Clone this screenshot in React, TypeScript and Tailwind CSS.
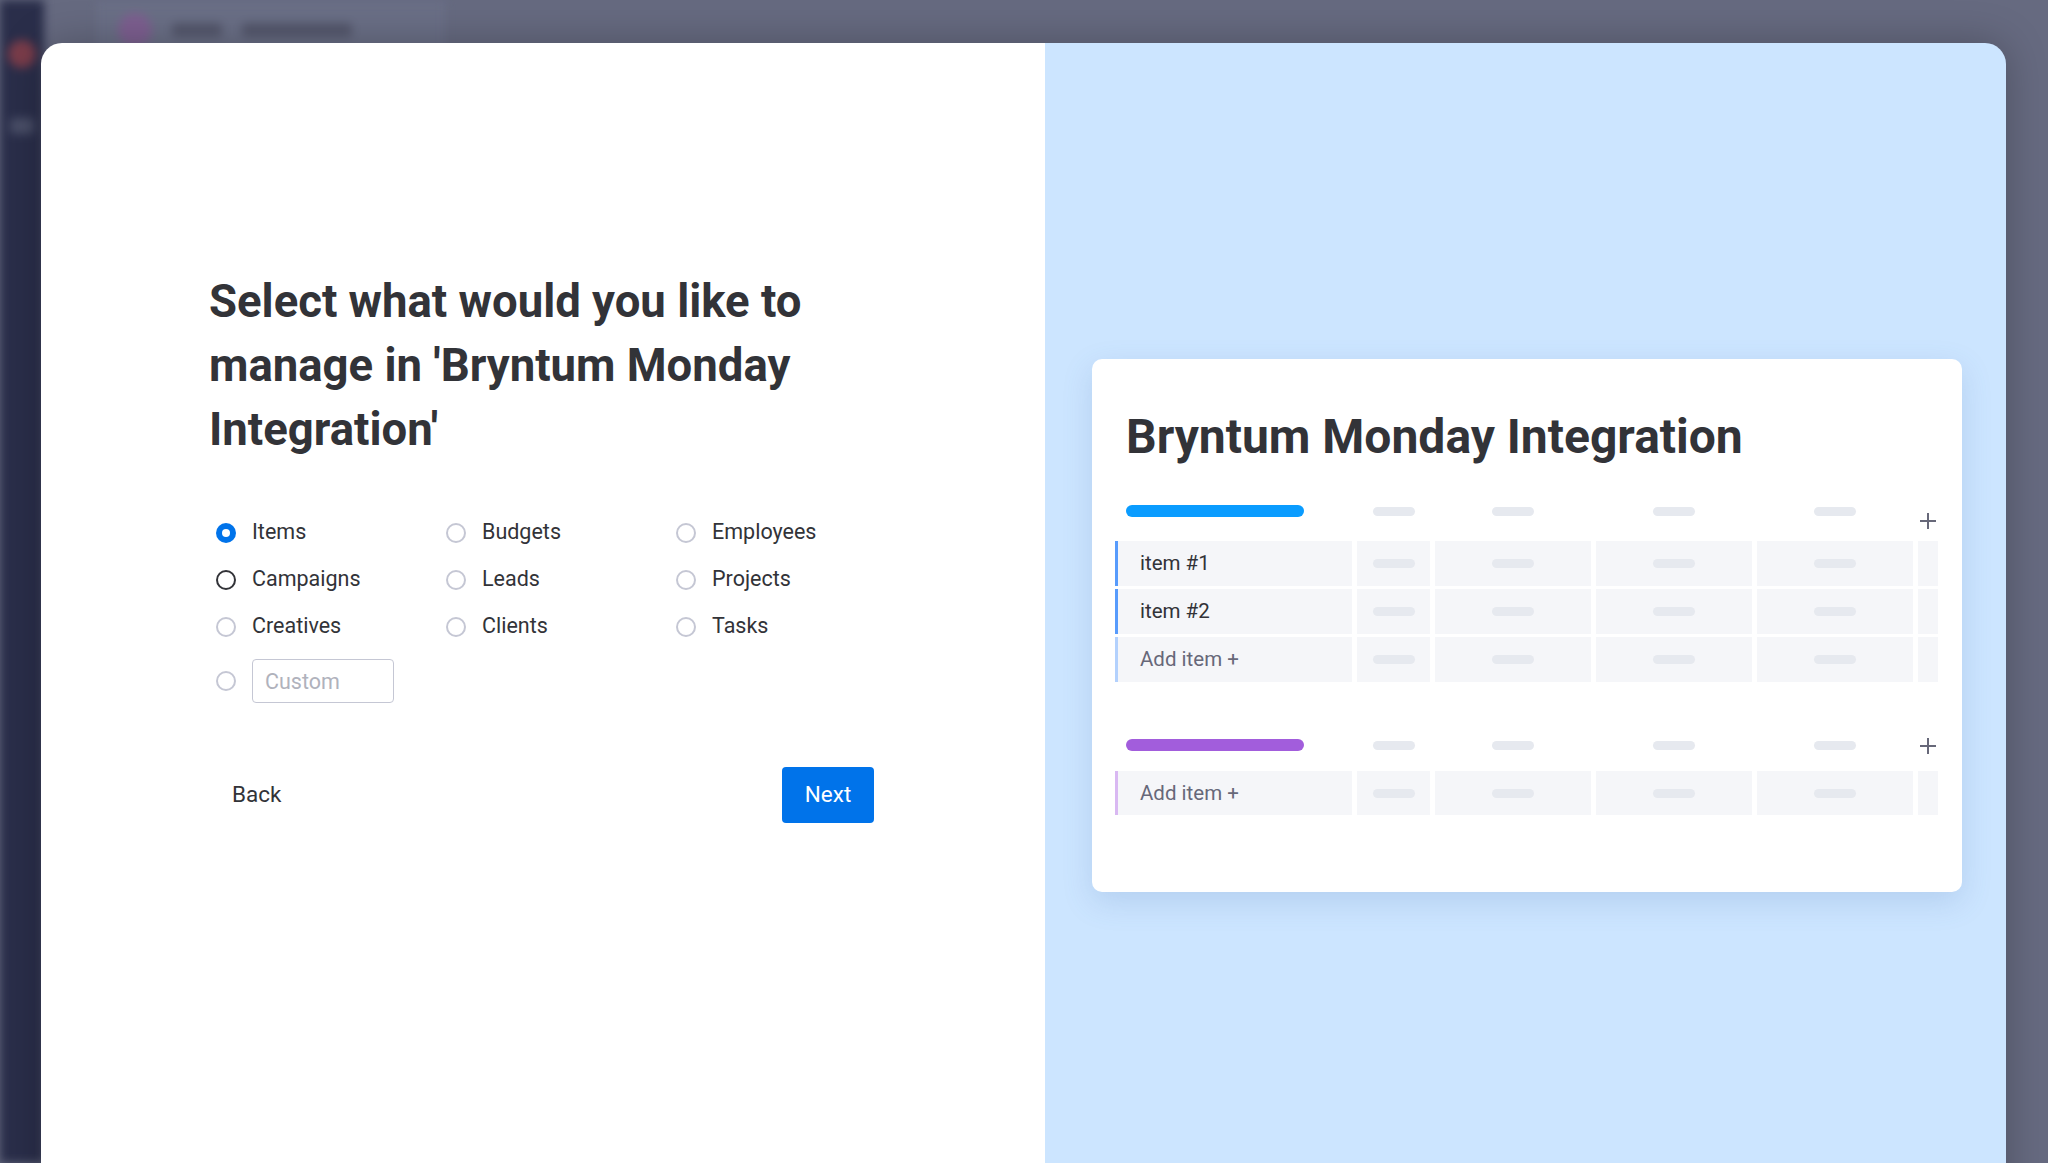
import React from 'react';

// Onboarding modal: pick the entity type for the new board

type Option = { label: string; state?: 'checked' | 'focus' };

const OPTIONS: Option[] = [
  { label: 'Items', state: 'checked' },
  { label: 'Budgets' },
  { label: 'Employees' },
  { label: 'Campaigns', state: 'focus' },
  { label: 'Leads' },
  { label: 'Projects' },
  { label: 'Creatives' },
  { label: 'Clients' },
  { label: 'Tasks' },
];

const Radio: React.FC<{ state?: 'checked' | 'focus' }> = ({ state }) => {
  if (state === 'checked') {
    return (
      <span className="flex h-[20px] w-[20px] shrink-0 items-center justify-center rounded-full bg-[#0073ea]">
        <span className="h-[8px] w-[8px] rounded-full bg-white" />
      </span>
    );
  }
  return (
    <span
      className={
        state === 'focus'
          ? 'h-[20px] w-[20px] shrink-0 rounded-full border-2 border-[#323338]'
          : 'h-[20px] w-[20px] shrink-0 rounded-full border-2 border-[#c5c7d4]'
      }
    />
  );
};

const Pill = () => <span className="h-[9px] w-[42px] rounded-full bg-[#e6e9ef]" />;

const PlusIcon = () => (
  <svg width="18" height="18" viewBox="0 0 18 18" className="text-[#676879]">
    <path d="M9 1v16M1 9h16" stroke="currentColor" strokeWidth="2" />
  </svg>
);

const COLS = 'grid grid-cols-[237px_73px_156px_156px_156px_20px] gap-x-[5px]';

const GroupHeader: React.FC<{ color: string; plusOffset: string }> = ({ color, plusOffset }) => (
  <div className={`${COLS} h-[30px] items-center`}>
    <div className="pl-[11px]">
      <div className={`h-[12px] w-[178px] rounded-full ${color}`} />
    </div>
    <div className="flex justify-center"><Pill /></div>
    <div className="flex justify-center"><Pill /></div>
    <div className="flex justify-center"><Pill /></div>
    <div className="flex justify-center"><Pill /></div>
    <div className={`flex justify-center ${plusOffset}`}><PlusIcon /></div>
  </div>
);

const Row: React.FC<{ label: string; border: string; muted?: boolean; h: string }> = ({ label, border, muted, h }) => (
  <div className={`${COLS} ${h}`}>
    <div className={`flex items-center border-l-[3px] bg-[#f5f6f9] pl-[22px] text-[20.5px] ${border} ${muted ? 'text-[#676879]' : 'text-[#323338]'}`}>
      {label}
    </div>
    <div className="flex items-center justify-center bg-[#f5f6f9]"><Pill /></div>
    <div className="flex items-center justify-center bg-[#f5f6f9]"><Pill /></div>
    <div className="flex items-center justify-center bg-[#f5f6f9]"><Pill /></div>
    <div className="flex items-center justify-center bg-[#f5f6f9]"><Pill /></div>
    <div className="bg-[#f5f6f9]" />
  </div>
);

export default function App() {
  return (
    <div
      className="relative h-[1163px] w-full overflow-hidden bg-[#666a80]"
      style={{ fontFamily: 'Roboto, "Liberation Sans", sans-serif' }}
    >
      {/* blurred app behind the modal */}
      <div className="flex h-full blur-[5px]">
        <div className="flex w-[44px] flex-col items-center bg-[#2a2e4a] pt-[40px]">
          <span className="h-[28px] w-[28px] rounded-full bg-[#7a3c4a]" />
          <span className="mt-[50px] h-[16px] w-[24px] rounded bg-[#4a4f68]" />
        </div>
        <div className="flex flex-1 flex-col">
          <div className="flex h-[60px] items-center">
            <div className="ml-[52px] flex h-full w-[350px] items-center gap-[20px] bg-[#6a6f86] pl-[22px]">
              <span className="h-[34px] w-[34px] rounded-full bg-[#7d5f90]" />
              <span className="h-[14px] w-[50px] rounded bg-[#54576c]" />
              <span className="h-[14px] w-[110px] rounded bg-[#54576c]" />
            </div>
          </div>
        </div>
      </div>

      {/* modal */}
      <div className="absolute left-[41px] right-[42px] top-[43px] flex h-[1200px] overflow-hidden rounded-[21px] shadow-[0_0_40px_rgba(0,0,0,0.25)]">
        <div className="w-[1004px] shrink-0 bg-white pl-[168px] pt-[227px]">
          <h1 className="w-[660px] text-[45.5px] font-bold leading-[64px] text-[#323338]">
            Select what would you like to manage in 'Bryntum Monday Integration'
          </h1>

          <div className="mt-[47px] grid grid-cols-[230px_230px_230px] text-[21.5px] text-[#323338]">
            {OPTIONS.map((o) => (
              <label key={o.label} className="flex h-[47px] items-center gap-[16px] pl-[7px]">
                <Radio state={o.state} />
                <span>{o.label}</span>
              </label>
            ))}
          </div>

          <div className="mt-[9px] flex items-center gap-[16px] pl-[7px]">
            <Radio />
            <input
              placeholder="Custom"
              className="h-[44px] w-[142px] rounded-[4px] border border-[#c5c7d4] px-[12px] text-[21.5px] text-[#323338] outline-none placeholder:text-[#b0b2bc]"
            />
          </div>

          <div className="mt-[64px] flex w-[665px] items-center justify-between">
            <button className="h-[56px] rounded-[4px] px-[23px] text-[22.5px] text-[#323338]">Back</button>
            <button className="h-[56px] w-[92px] rounded-[4px] bg-[#0073ea] text-[22.5px] text-white">Next</button>
          </div>
        </div>

        <div className="flex-1 bg-[#cce5ff] pl-[47px] pr-[44px] pt-[316px]">
          <div className="rounded-[10px] bg-white px-[23px] pb-[77px] pt-[50px] shadow-[0_10px_30px_rgba(70,110,170,0.18)]">
            <h2 className="pl-[11px] text-[48px] font-bold leading-[56px] text-[#323338]">
              Bryntum Monday Integration
            </h2>

            <div className="mt-[31px] mb-[15px]">
              <GroupHeader color="bg-[#0a9cff]" plusOffset="translate-y-[10px]" />
            </div>
            <div className="flex flex-col gap-y-[3px]">
              <Row label="item #1" border="border-[#579bfc]" h="h-[45px]" />
              <Row label="item #2" border="border-[#579bfc]" h="h-[45px]" />
              <Row label="Add item +" border="border-[#b3d1fd]" muted h="h-[45px]" />
            </div>

            <div className="mt-[48px] mb-[11px]">
              <GroupHeader color="bg-[#a25ddc]" plusOffset="translate-y-[1px]" />
            </div>
            <Row label="Add item +" border="border-[#d9b8f2]" muted h="h-[44px]" />
          </div>
        </div>
      </div>
    </div>
  );
}
